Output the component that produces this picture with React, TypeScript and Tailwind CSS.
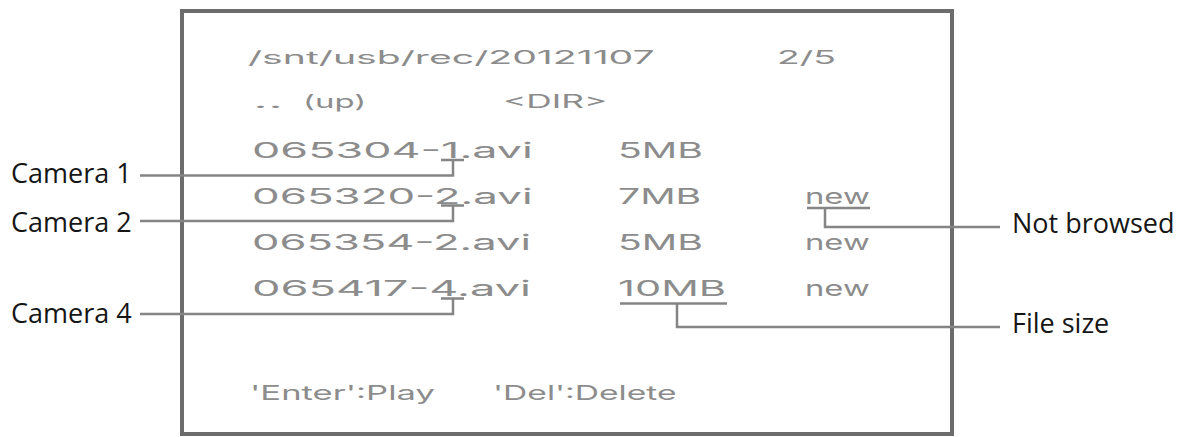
import { useLayoutEffect, useRef, useState } from "react";

// stretches a run of text horizontally so it covers the given width
function Fit({ w, children }: { w: number; children: string }) {
  const ref = useRef<HTMLSpanElement>(null);
  const [sx, setSx] = useState(1);

  useLayoutEffect(() => {
    const fit = () => {
      if (ref.current && ref.current.offsetWidth) setSx(w / ref.current.offsetWidth);
    };
    fit();
    document.fonts?.ready.then(fit);
  }, [w, children]);

  return (
    <span
      ref={ref}
      className="inline-block origin-left whitespace-nowrap"
      style={{ transform: `scaleX(${sx})` }}
    >
      {children}
    </span>
  );
}

const FILES = [
  { name: "065304-1.avi", size: "5MB", sizeW: 84, isNew: false },
  { name: "065320-2.avi", size: "7MB", sizeW: 84, isNew: true },
  { name: "065354-2.avi", size: "5MB", sizeW: 84, isNew: true },
  { name: "065417-4.avi", size: "10MB", sizeW: 109, isNew: true },
];

export default function App() {
  return (
    <div className="relative flex w-[1181px] h-[437px] overflow-hidden bg-white font-['Open_Sans',sans-serif] text-[#161616]">
      {/* left labels */}
      <div className="flex w-[180px] shrink-0 flex-col pl-[11px] pt-[159px] text-[27px] leading-none">
        <div className="h-[49px]">Camera 1</div>
        <div className="h-[91px]">Camera 2</div>
        <div>Camera 4</div>
      </div>

      {/* the screen */}
      <div className="mt-[9px] flex h-[427px] w-[774px] shrink-0 flex-col border-4 border-[#6c6c6c] pl-[64px] pt-[36px] font-['Inter',sans-serif] font-normal text-[#8c8c8c]">
        <div className="flex h-[44px] text-[18px] leading-none">
          <div className="w-[529px]">
            <Fit w={407}>/snt/usb/rec/20121107</Fit>
          </div>
          <Fit w={58}>2/5</Fit>
        </div>

        <div className="flex h-[47px] pl-[5px] text-[18px] leading-none">
          <div className="w-[50px]">
            <Fit w={29}>..</Fit>
          </div>
          <div className="w-[200px]">
            <Fit w={64}>(up)</Fit>
          </div>
          <Fit w={104}>&lt;DIR&gt;</Fit>
        </div>

        {FILES.map((f) => (
          <div key={f.name} className="flex h-[46px] pl-[4px] text-[21px] leading-none">
            <div className="w-[366px]">
              <Fit w={280}>{f.name}</Fit>
            </div>
            <div className="w-[187px]">
              <Fit w={f.sizeW}>{f.size}</Fit>
            </div>
            {f.isNew && <Fit w={64}>new</Fit>}
          </div>
        ))}

        <div className="mt-[59px] flex pl-[2px] text-[20px] leading-none">
          <div className="w-[243px]">
            <Fit w={185}>'Enter':Play</Fit>
          </div>
          <Fit w={183}>'Del':Delete</Fit>
        </div>
      </div>

      {/* right labels */}
      <div className="flex flex-col pl-[58px] pt-[209px] text-[27px] leading-none">
        <div className="h-[100px]">Not browsed</div>
        <div>File size</div>
      </div>

      {/* leader lines */}
      <svg
        className="pointer-events-none absolute inset-0"
        width="1181"
        height="437"
        fill="none"
        stroke="#858585"
        strokeWidth="2.5"
      >
        <path d="M140 175.5H453V160M441 160H464" />
        <path d="M140 221H453V205.5M441 205.5H464" />
        <path d="M140 314H453V298.5M441 298.5H464" />
        <path d="M807 208H870M825 208V227H1000" />
        <path d="M620 303.5H727M677 303.5V327H1000" />
      </svg>
    </div>
  );
}
